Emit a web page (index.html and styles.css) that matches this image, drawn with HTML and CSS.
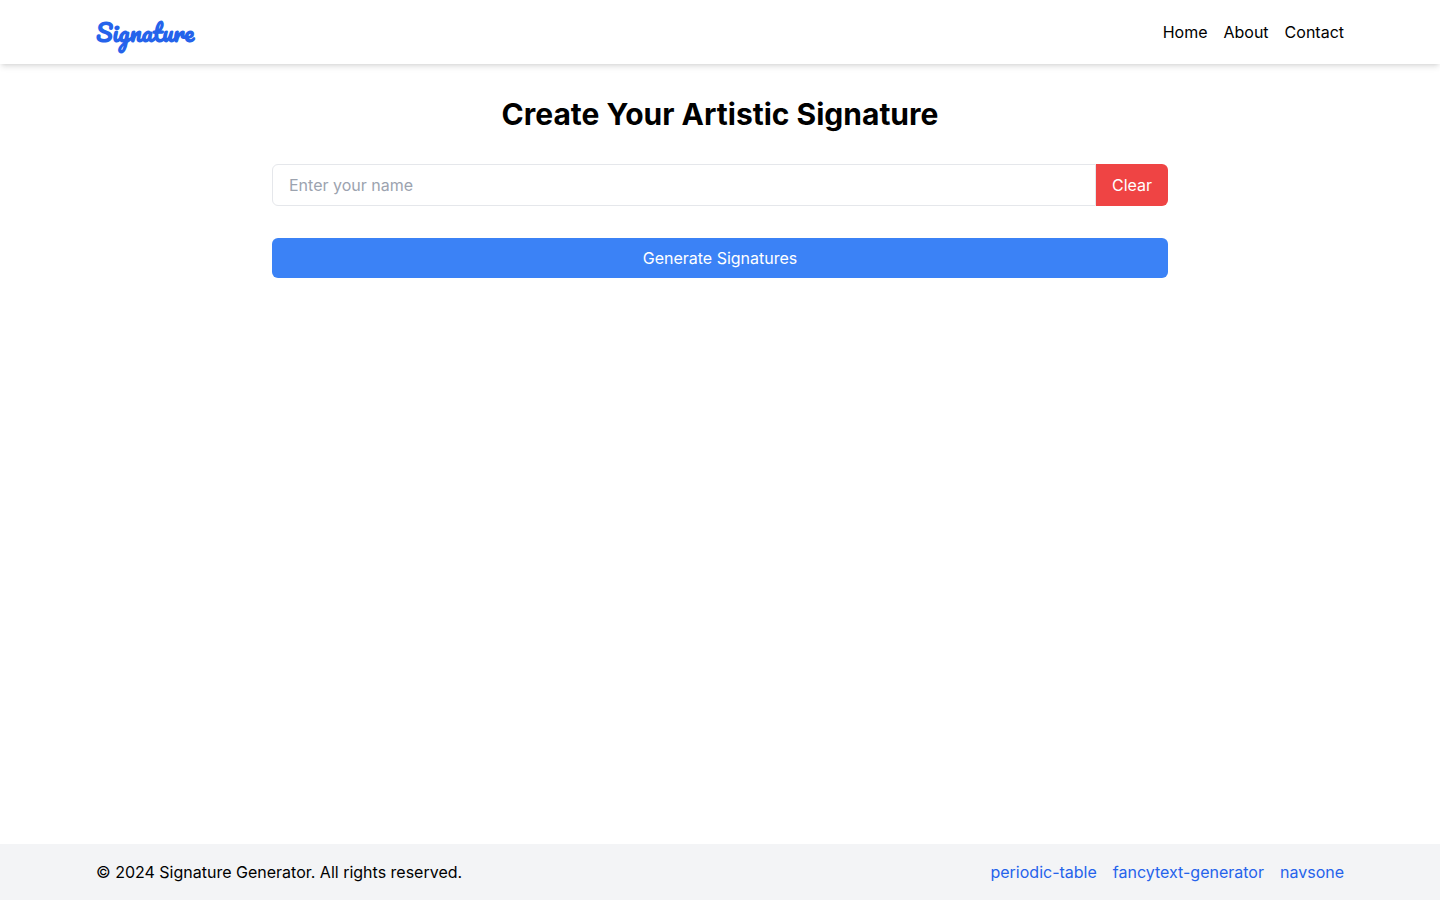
FILE: index.html
```
<!DOCTYPE html>
<html lang="en">
<head>
<meta charset="utf-8">
<meta name="viewport" content="width=device-width, initial-scale=1">
<title>Signature Generator</title>
<link rel="stylesheet" href="styles.css">
</head>
<body>
<header class="site-header">
  <div class="container bar">
    <a class="logo" href="#">Signature</a>
    <nav class="links">
      <a href="#">Home</a>
      <a href="#about">About</a>
      <a href="#contact">Contact</a>
    </nav>
  </div>
</header>
<main class="main">
  <h1 class="title">Create Your Artistic Signature</h1>
  <form class="form">
    <div class="field">
      <input class="name-input" type="text" placeholder="Enter your name" aria-label="Enter your name">
      <button class="clear" type="reset">Clear</button>
    </div>
    <button class="generate" type="button">Generate Signatures</button>
  </form>
</main>
<footer class="site-footer">
  <div class="container bar">
    <p class="copyright">© 2024 Signature Generator. All rights reserved.</p>
    <nav class="links footer-links" aria-label="Related sites">
      <a href="#periodic-table">periodic-table</a>
      <a href="#fancytext-generator">fancytext-generator</a>
      <a href="#navsone">navsone</a>
    </nav>
  </div>
</footer>
</body>
</html>
```
FILE: styles.css
```
*, *::before, *::after {
  box-sizing: border-box;
}

body {
  margin: 0;
  min-height: 100vh;
  display: flex;
  flex-direction: column;
  background: #fff;
  color: #000;
  font-family: Inter, sans-serif;
  font-size: 16px;
  line-height: 24px;
}

a {
  color: inherit;
  text-decoration: none;
}

input, button {
  margin: 0;
  font: inherit;
}

.container {
  width: 100%;
  max-width: 1280px;
  margin: 0 auto;
  padding: 0 16px;
}

.bar {
  display: flex;
  align-items: center;
  justify-content: space-between;
}

.site-header {
  padding: 16px 0;
  background: #fff;
  box-shadow: 0 4px 6px -1px rgba(0, 0, 0, 0.1), 0 2px 4px -2px rgba(0, 0, 0, 0.1);
}

.logo {
  color: #2563eb;
  font-family: Pacifico, cursive;
  font-size: 24px;
  font-weight: 700;
  line-height: 32px;
}

.links {
  display: flex;
  gap: 16px;
}

.main {
  flex: 1;
  width: 100%;
  max-width: 928px;
  margin: 0 auto;
  padding: 32px 16px;
}

.title {
  margin: 0 0 32px;
  font-size: 30px;
  font-weight: 700;
  line-height: 36px;
  text-align: center;
}

.form {
  display: flex;
  flex-direction: column;
  gap: 32px;
}

.field {
  display: flex;
}

.name-input {
  flex: 1;
  min-width: 0;
  padding: 8px 16px;
  border: 1px solid #e5e7eb;
  border-radius: 6px 0 0 6px;
  background: #fff;
  color: #000;
}

.name-input::placeholder {
  color: #9ca3af;
}

.clear {
  padding: 8px 16px;
  border: 0;
  border-radius: 0 6px 6px 0;
  background: #ef4444;
  color: #fff;
}

.generate {
  padding: 8px 16px;
  border: 0;
  border-radius: 6px;
  background: #3b82f6;
  color: #fff;
}

.site-footer {
  padding: 16px 0;
  background: #f3f4f6;
}

.copyright {
  margin: 0;
}

.footer-links {
  color: #2563eb;
}
```
